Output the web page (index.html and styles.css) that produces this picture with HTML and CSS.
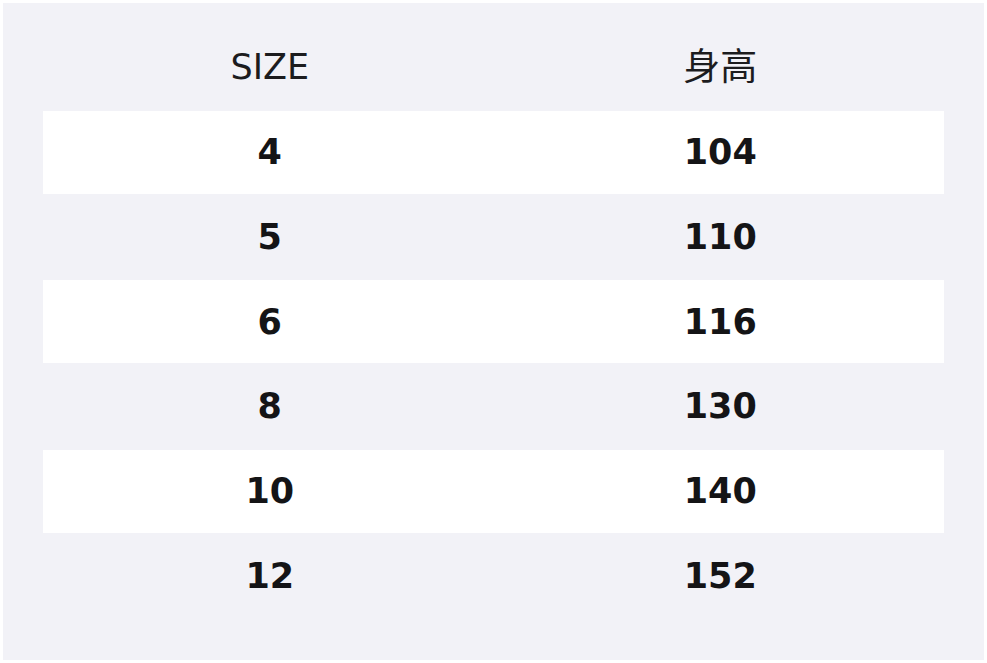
FILE: index.html
```html
<!DOCTYPE html>
<html lang="zh">
<head>
<meta charset="utf-8">
<link rel="stylesheet" href="styles.css">
</head>
<body>
<div class="panel">
  <div class="row head">
    <div class="cell">SIZE</div>
    <div class="cell">身高</div>
  </div>
  <div class="row white"><div class="cell">4</div><div class="cell">104</div></div>
  <div class="row"><div class="cell">5</div><div class="cell">110</div></div>
  <div class="row white"><div class="cell">6</div><div class="cell">116</div></div>
  <div class="row"><div class="cell">8</div><div class="cell">130</div></div>
  <div class="row white"><div class="cell">10</div><div class="cell">140</div></div>
  <div class="row"><div class="cell">12</div><div class="cell">152</div></div>
</div>
</body>
</html>
```
FILE: styles.css
```css
html, body {
  margin: 0;
  padding: 0;
  background: #ffffff;
}
body {
  padding: 3px;
  width: 987px;
  height: 663px;
  box-sizing: border-box;
}
.panel {
  background: #f2f2f7;
  width: 981px;
  height: 657px;
  box-sizing: border-box;
  padding: 23px 40px 0 40px;
  display: flex;
  flex-direction: column;
  gap: 2px;
}
.row {
  display: grid;
  grid-template-columns: 1fr 1fr;
  height: 82.75px;
  align-items: center;
}
.cell {
  text-align: center;
  padding-left: 3px;
  font-family: "DejaVu Sans", "Noto Sans CJK SC", sans-serif;
  font-size: 35px;
  font-weight: bold;
  color: #141416;
}
.head .cell {
  font-weight: normal;
  color: #1c1c1e;
}
.head .cell:last-child {
  font-size: 37px;
  padding-bottom: 6px;
}
.white {
  background: #ffffff;
}
```
